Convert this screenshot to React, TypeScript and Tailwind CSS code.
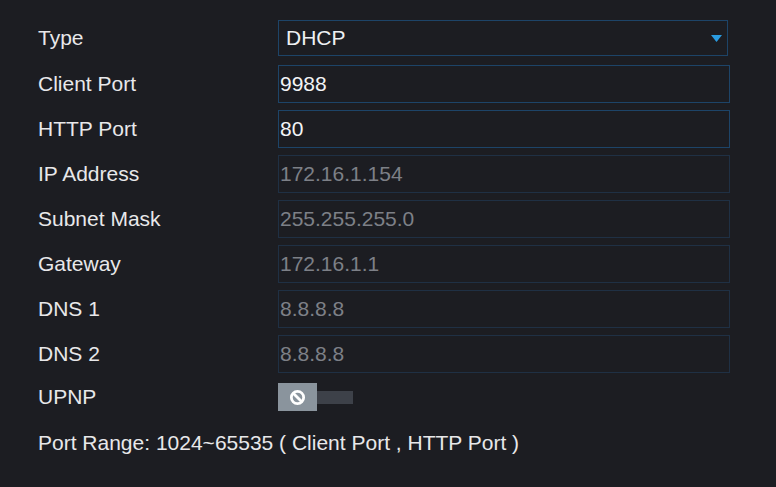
const rows: { label: string; value: string; editable: boolean }[] = [
  { label: "Client Port", value: "9988", editable: true },
  { label: "HTTP Port", value: "80", editable: true },
  { label: "IP Address", value: "172.16.1.154", editable: false },
  { label: "Subnet Mask", value: "255.255.255.0", editable: false },
  { label: "Gateway", value: "172.16.1.1", editable: false },
  { label: "DNS 1", value: "8.8.8.8", editable: false },
  { label: "DNS 2", value: "8.8.8.8", editable: false },
];

function Label({ children }: { children: React.ReactNode }) {
  return <div className="w-[240px] shrink-0 pl-[38px] text-[21px] text-[#e8e8ea]">{children}</div>;
}

export default function App() {
  return (
    <div
      className="w-[776px] h-[487px] bg-[#1c1d22] pt-5"
      style={{ fontFamily: '"Liberation Sans", Arial, sans-serif' }}
    >
      <div className="flex items-center h-9">
        <Label>Type</Label>
        <div className="ml-[38px] flex items-center justify-between w-[450px] h-9 border border-[#1d4468] pl-[7px] pr-[5px]">
          <span className="text-[21px] text-[#eef0f2]">DHCP</span>
          <svg width="11" height="7" viewBox="0 0 11 7">
            <path d="M0 0h11L5.5 7z" fill="#2a9be0" />
          </svg>
        </div>
      </div>

      <div className="flex flex-col gap-[7px] mt-[9px]">
        {rows.map((r) => (
          <div key={r.label} className="flex items-center h-[38px]">
            <Label>{r.label}</Label>
            <div
              className={
                "ml-[38px] flex items-center w-[452px] h-[38px] border pl-[1px] text-[21px] " +
                (r.editable
                  ? "border-[#1d4468] text-[#f2f4f6]"
                  : "border-[#1f3044] text-[#7d8087]")
              }
            >
              {r.value}
            </div>
          </div>
        ))}
      </div>

      <div className="flex items-center h-[28px] mt-[10px]">
        <Label>UPNP</Label>
        <div className="ml-[38px] flex items-center">
          <div className="w-[39px] h-[28px] bg-[#8a949d] flex items-center justify-center">
            <svg width="17" height="17" viewBox="0 0 16 16">
              <circle cx="8" cy="8" r="5.8" fill="none" stroke="#fff" strokeWidth="2.6" />
              <path d="M4 4l8 8" stroke="#fff" strokeWidth="2.6" />
            </svg>
          </div>
          <div className="w-[36px] h-[13px] bg-[#3d4149]" />
        </div>
      </div>

      <div className="mt-[16px] pl-[38px] text-[21px] text-[#e8e8ea]">
        Port Range: 1024~65535 ( Client Port , HTTP Port )
      </div>
    </div>
  );
}
